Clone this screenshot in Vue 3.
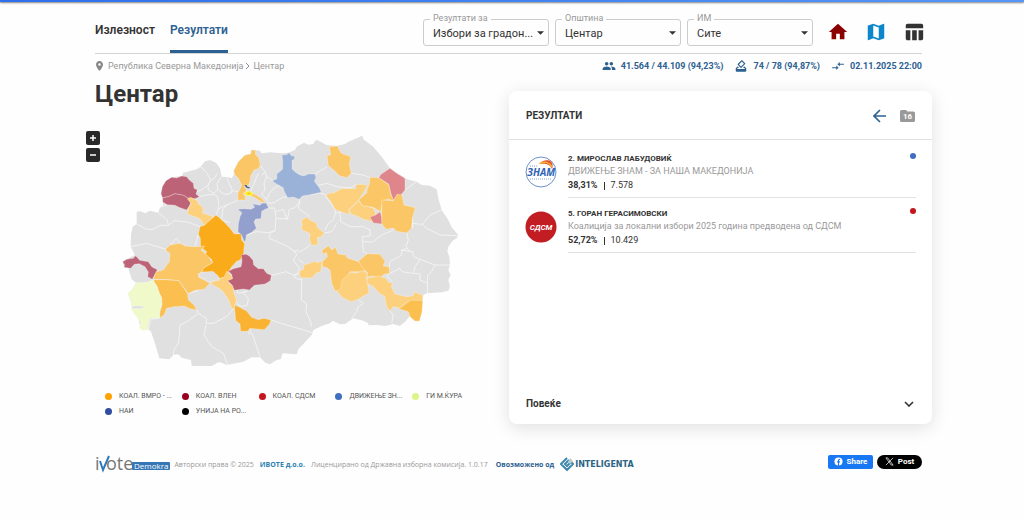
<script setup>
import { ref } from 'vue'

const filters = [
  { id: 'type', label: 'Резултати за', value: 'Избори за градон...' },
  { id: 'municipality', label: 'Општина', value: 'Центар' },
  { id: 'station', label: 'ИМ', value: 'Сите' },
]

const candidates = [
  { id: 2, name: 'МИРОСЛАВ ЛАБУДОВИЌ', party: 'ДВИЖЕЊЕ ЗНАМ - ЗА НАША МАКЕДОНИЈА', share: '38,31%', votes: '7.578', color: '#3f6fbf' },
  { id: 5, name: 'ГОРАН ГЕРАСИМОВСКИ', party: 'Коалиција за локални избори 2025 година предводена од СДСМ', share: '52,72%', votes: '10.429', color: '#c4161c' },
]

const legend = [
  { name: 'КОАЛ. ВМРО - ...', color: '#ffa200' },
  { name: 'КОАЛ. ВЛЕН', color: '#97001f' },
  { name: 'КОАЛ. СДСМ', color: '#c4161c' },
  { name: 'ДВИЖЕЊЕ ЗН...', color: '#3f6fbf' },
  { name: 'ГИ М.ЌУРА', color: '#dcf58a' },
  { name: 'НАИ', color: '#2f4da3' },
  { name: 'УНИЈА НА РО...', color: '#000000' },
]

const country =
  'M153 345L158 320L170 312V275L183 274L195 280L210 272L235 278L240 262L250 254L248 235L243 222L247 200L258 182L275 172L305 168L310 158L350 148L362 140L375 124L390 120L408 128L420 145L425 170L445 172L455 175L461 165V152L475 125L495 105L512 102L514 90H526L540 93L545 100L570 97L605 100L625 98L645 90L650 80L672 68L685 74L700 72L705 62L712 60L740 75L770 78L795 72L805 65L830 55L847 47L850 58L880 80L905 110L930 145L975 175L990 180L1010 185L1025 195L1050 197L1070 208L1075 235L1085 270L1105 300L1115 322L1135 345L1130 355L1118 362L1105 380L1102 395L1108 410L1110 435L1105 450L1112 465L1105 480L1110 500L1105 512L1085 517L1040 520L1030 525L1028 540L1026 575L1018 602L1005 603L990 588L975 605L960 618L940 612L915 618L890 615L865 616V610L850 602L820 595L795 612L780 613L758 602L750 610L725 618L700 630L695 645L670 672L655 688L650 703L608 700L602 718L590 720L570 733L556 728L540 712L515 712L490 725L440 735L425 728L415 727L395 738H335L333 720L305 713L295 703L280 705L268 718L238 715L225 670L212 632L205 630L182 625L178 610L175 595L155 565L152 545L143 520L155 510L168 488L155 478L145 445L132 442L128 425L145 415L165 405L152 380Z'

const regions = [
  { fill: '#bd6377', d: 'M243 222L247 200L258 182L275 172L290 174L305 168L320 170L328 180L340 190L342 205L352 210L348 222L358 230L345 236L325 235L310 226L285 221L265 230L248 234Z' },
  { fill: '#bd6377', d: 'M248 234L265 230L285 221L310 226L325 235L334 244L328 258L320 270L300 263L285 256L262 254L248 246Z' },
  { fill: '#fcd07c', d: 'M322 236L332 232L352 242L356 252L370 264L367 278L382 284L400 290L385 305L372 315L360 296L322 282L326 262L334 252Z' },
  { fill: '#fbc766', d: 'M461 152L475 125L495 105L512 102L514 90H526L527 105L536 112L541 136L535 146L522 150L512 168L510 185L505 196L492 200L500 210L490 222L496 230V240H473L474 218L480 208L485 195L475 175L465 165Z' },
  { fill: '#fbc766', d: 'M514 218L530 226L546 236L557 250L545 246L530 236L512 226Z' },
  { fill: '#fff200', d: 'M498 216L508 213L519 219L514 227L500 227L494 221Z' },
  { fill: '#e39b17', d: 'M504 219L512 217L509 222L502 223Z' },
  { fill: '#46527a', d: 'M492 196L499 194L503 200L509 201V206L500 204Z' },
  { fill: '#939fcd', d: 'M473 268L490 266L513 268L524 262L518 252L540 256L545 250L558 249L566 264L555 268L545 274L543 296L527 297L522 306L529 325L515 337L499 345L497 360L493 366L485 346L474 335L475 312L480 290L486 278Z' },
  { fill: '#9ab1d8', d: 'M606 105L620 104L627 98L634 107L644 109L643 118L636 121V147L646 156L660 165L672 168L685 162H704L708 172L703 184L718 203L724 217L690 224L667 228L658 238L640 231L623 233L612 213L610 203L590 192L576 183L591 176L590 162L602 153L608 147V124Z' },
  { fill: '#fbc766', d: 'M748 80L772 78L783 99L812 110L808 135L814 160L800 173L780 168L762 151L745 137L741 107L752 104Z' },
  { fill: '#de868c', d: 'M930 145L950 160L975 175V210L962 226H950L940 243L933 222L926 192L896 173L903 163Z' },
  { fill: '#fcd07c', d: 'M738 225L750 219H760L785 206L827 206V194L852 193L862 198L848 222L836 240L820 256L806 270L810 284L785 276L765 268L753 246Z' },
  { fill: '#fcd07c', d: 'M836 242L846 256L880 264L888 285L875 291L878 305L850 298L828 287L815 283L807 270Z' },
  { fill: '#fbc766', d: 'M870 172L896 173L926 194L933 225L942 242L925 238L907 242L902 275L880 262L848 257L836 240L860 219L862 206L868 193Z' },
  { fill: '#de868c', d: 'M870 291L887 285L900 275L905 290L906 312L880 309Z' },
  { fill: '#fbc766', d: 'M906 240L940 242L952 222L966 225L972 255L1006 263L998 290L994 325L980 339L950 334L940 324L918 328L906 312L905 280Z' },
  { fill: '#fcd07c', d: 'M664 300L680 292L694 302L709 309L713 323L733 339L723 350L712 353L714 370L710 375H694L688 359L690 341L663 328L667 314Z' },
  { fill: '#fcd07c', d: 'M658 454L671 448V435L690 430L702 424L712 428L725 422V436L722 455L707 460L697 473L665 474L658 464Z' },
  { fill: '#fbc766', d: 'M726 391L745 377L755 390L766 382L774 402L797 405L802 414L836 425L855 446L850 455L810 455L795 480L785 500L782 513L765 513L755 490L750 450L738 442L727 440V425L742 410L740 398L728 402Z' },
  { fill: '#fcd07c', d: 'M770 513L782 506L786 480L812 457L830 459L850 452L862 460L860 475L866 510L867 520L850 528L835 538L814 545L788 533Z' },
  { fill: '#fbc766', d: 'M836 423L862 401L900 403L915 424L910 438L927 440L929 460L912 463L900 473L875 468L861 472L863 459L845 440Z' },
  { fill: '#fcd07c', d: 'M861 475L895 468L917 475L925 487L938 488L934 500L945 522L980 530L1000 527L1002 516L1028 525L1028 541L990 543L975 552L958 564L940 560L930 573L920 560L914 529L900 521L880 500L862 490Z' },
  { fill: '#fbbf4f', d: 'M956 566L976 552L992 541L1028 541L1026 575L1018 604L1005 603L990 590L985 575Z' },
  { fill: '#faab19', d: 'M360 320L373 316L408 285L430 304L450 325L463 342L483 342L485 360L494 372L492 384L491 400L480 420L470 424L455 440L440 465L438 470L420 475L405 464L382 459L365 455L372 443L398 428L395 418L376 404L380 395L362 380L361 355L355 343Z' },
  { fill: '#fbc766', d: 'M257 388L270 375L300 370L315 378L345 380L375 378L363 390L380 404L398 428L372 443L366 455L355 462L357 472L378 483L390 490L372 508L345 511L325 521L307 497L297 482L253 478L219 478L229 455L250 450L268 425L270 400L260 394Z' },
  { fill: '#fbbf4f', d: 'M219 480L253 479L296 482L305 495L323 522L325 540L342 555L350 570L330 566L313 558L282 560L260 565L252 585L239 594L240 575L246 555L244 533L236 515L232 500Z' },
  { fill: '#fcd07c', d: 'M390 490L420 475L432 472L440 453L456 468L455 480L445 487L460 500L462 520L470 540L460 568L453 562L448 545L440 530L425 510Z' },
  { fill: '#bd6377', d: 'M445 454L460 446L483 440L486 425L484 404L498 403L507 407L519 421L521 435L535 446H550L560 460L574 466L571 482L555 492L523 496L508 510L490 507L463 511L457 496L443 482L458 476L455 463Z' },
  { fill: '#fab233', d: 'M463 555L475 560L500 573L515 592L535 599L552 595L573 600L568 613L553 629L510 625L503 634H482L480 612L467 601Z' },
  { fill: '#bd6377', d: 'M128 425L140 418L160 415L167 407L179 421L205 425L215 440L232 449L225 462L217 478L203 470L205 456L195 440L178 431L163 433L152 445L132 442L134 435Z' },
  { fill: '#eff9c9', d: 'M168 488L200 487L219 480L231 500L236 515L245 533L245 555L238 575L239 594L210 594L205 610L203 630L185 631L177 622L183 608L170 590L155 572L153 545L143 520L155 510Z' },
  { fill: '#e0e0e0', d: 'M155 560L165 557L190 559L194 562L180 566H157Z' },
  { fill: '#e0e0e0', d: 'M355 462L372 456L398 454L414 467L418 481L402 482L386 486L374 476L357 472Z' },
]

const borders = [
  'M350 148L362 140L380 158L392 180L384 196L365 210L350 214M392 180L404 175L412 160M384 196L385 210L402 220L413 208L411 190L425 170',
  'M235 278L262 300L265 316L240 316L220 328L200 328L170 312M265 316L282 302L322 306L345 314L360 320M240 262L262 254',
  'M358 230L385 224H405L413 230L417 260L408 285M413 208L430 222L450 222L457 210L445 185L440 172M450 222L460 212L477 216M417 266L440 255L465 245L473 240M425 300L428 270L440 255M425 300L450 308',
  'M540 136L556 156L560 170L552 190L555 210L545 222M535 160L520 195L512 214M556 156L545 165M560 170L580 183M545 222L560 240L570 215L590 200L610 195M560 240L566 250',
  'M566 250L582 248L612 230L623 233M566 264H584L588 296L585 332L565 338L529 335L497 346M588 275L610 268L622 300L628 268L645 263L655 250L660 238M588 296H622',
  'M690 224L720 219L738 225M660 238L655 265L690 290M736 228L765 268L766 280L760 300L745 310L735 330M765 280L785 276M780 280L782 305L810 320L850 320L870 330L870 348L848 350L848 365L878 366',
  'M646 156L660 165M704 162L740 141M708 198L740 190L770 200L810 204L827 194M814 160L850 165L868 172',
  'M975 210L1010 185M940 324L980 339L985 360L978 380L990 395M994 310L1027 313L1050 285L1085 270M1027 313L1040 325L1080 345L1135 347M998 290V325',
  'M878 366L905 345L940 330M848 366L850 395L862 401M980 385L965 390L965 405L930 425L928 440M965 390L998 395L1000 410L1020 418L1065 435H1110M1020 418L1005 440L1000 460L965 455L960 445L930 460M1065 435L1055 455L1043 465L1042 520M1000 460L1020 462V480L1043 490M929 460L920 468L937 485',
  'M585 332L570 340L568 355L580 360L620 378L645 395L650 405L640 420L658 445L655 460L640 465L618 455L600 460L574 466M655 460L640 470L660 480L665 475L664 540L680 550L678 575L690 600L695 620M652 398L670 390L690 375M655 417L671 430M733 339L755 335L770 310M640 395L655 390',
  'M573 600L620 615L665 628L695 638M836 540L850 550L835 560L830 575L815 595M930 573L940 585L935 610M507 625L520 650L530 680L540 710M503 634L510 645',
  'M460 568L440 590L400 610L378 610L380 595L355 580L350 570M378 615L372 645L395 680L430 700L443 735M355 580L320 605L300 615L298 645L295 670L282 690L280 705M325 521L355 511',
  'M470 510L475 520L502 513M502 513L490 520L505 535L502 555L485 560L470 550M270 375L290 355L300 370M355 343L345 380M152 380L200 370L258 388M239 594L212 598L205 630',
]

const people = 'M16 11c1.66 0 2.99-1.34 2.99-3S17.66 5 16 5c-1.66 0-3 1.34-3 3s1.34 3 3 3zm-8 0c1.66 0 2.99-1.34 2.99-3S9.66 5 8 5C6.34 5 5 6.34 5 8s1.34 3 3 3zm0 2c-2.33 0-7 1.17-7 3.5V19h14v-2.5c0-2.33-4.67-3.5-7-3.5zm8 0c-.29 0-.62.02-.97.05 1.16.84 1.97 1.97 1.97 3.45V19h6v-2.5c0-2.33-4.67-3.5-7-3.5z'
const ballot = 'M18 13h-.68l-2 2h1.91L19 17H5l1.78-2h2.05l-2-2H6l-3 3v4c0 1.1.89 2 1.99 2H19c1.1 0 2-.89 2-2v-4l-3-3zm-1-5.05l-4.95 4.95-3.54-3.54 4.95-4.95L17 7.95zm-4.24-5.66L6.39 8.66c-.39.39-.39 1.02 0 1.41l4.95 4.95c.39.39 1.02.39 1.41 0l6.36-6.36c.39-.39.39-1.02 0-1.41L14.16 2.3c-.38-.4-1.01-.4-1.4-.01z'
const arrows = 'M9.01 14H2v2h7.01v3L13 15l-3.99-4v3zm5.98-1v-3H22V8h-7.01V5L11 9l3.99 4z'

const stats = [
  { icon: people, text: '41.564 / 44.109 (94,23%)' },
  { icon: ballot, text: '74 / 78 (94,87%)' },
  { icon: arrows, text: '02.11.2025 22:00' },
]

const zoom = ref(1)
</script>

<template>
  <div class="page">
    <div class="topbar"></div>
    <header class="header">
      <nav class="tabs">
        <a href="#turnout" class="tab">Излезност</a>
        <a href="#results" class="tab active">Резултати</a>
      </nav>
      <div class="filters">
        <div v-for="f in filters" :key="f.id" class="field">
          <label :for="f.id">{{ f.label }}</label>
          <select :id="f.id"><option>{{ f.value }}</option></select>
          <svg class="caret" viewBox="0 0 8 4"><path d="M0 0h8L4 4z" /></svg>
        </div>
      </div>
      <div class="views">
        <button aria-label="Почетна" class="home"><svg viewBox="0 0 24 24"><path d="M10 20v-6h4v6h5v-8h3L12 3 2 12h3v8z" /></svg></button>
        <button aria-label="Мапа" class="map-view"><svg viewBox="0 0 24 24"><path d="M20.500 3l-.16.03L15 5.100 9 3 3.360 4.900c-.21.07-.36.25-.36.48V20.500c0 .28.22.5.5.5l.16-.03L9 18.900l6 2.100 5.640-1.900c.21-.07.36-.25.36-.48V3.500c0-.28-.22-.5-.5-.5zM15 19l-6-2.110V5l6 2.110V19z" /></svg></button>
        <button aria-label="Табела" class="table-view"><svg viewBox="0 0 24 24"><path d="M10 10h5v11h-5zM17 21h3c1.1 0 2-.9 2-2v-9h-5v11zm3-18H5c-1.1 0-2 .9-2 2v3h19V5c0-1.1-.9-2-2-2zM3 19c0 1.1.9 2 2 2h3V10H3v9z" /></svg></button>
      </div>
    </header>

    <div class="meta">
      <div class="crumbs">
        <svg viewBox="5 2 14 20"><path d="M12 2C8.130 2 5 5.130 5 9c0 5.250 7 13 7 13s7-7.750 7-13c0-3.870-3.130-7-7-7zm0 9.500a2.500 2.500 0 0 1 0-5 2.500 2.500 0 0 1 0 5z" /></svg>
        <a href="#country">Република Северна Македонија</a>
        <svg class="sep" viewBox="0 0 6 8"><path d="M1 1l3 3-3 3" /></svg>
        <span>Центар</span>
      </div>
      <div class="stats">
        <div v-for="s in stats" :key="s.text" class="stat">
          <svg viewBox="0 0 24 24"><path :d="s.icon" /></svg>{{ s.text }}
        </div>
      </div>
    </div>

    <main class="main">
      <section class="left">
        <h1>Центар</h1>
        <div class="map">
          <svg viewBox="18 0 1269 780" role="img" aria-label="Мапа на општини">
            <path class="country" :d="country" />
            <path v-for="(b, i) in borders" :key="'b' + i" class="border" :d="b" />
            <path v-for="(r, i) in regions" :key="i" class="region" :d="r.d" :fill="r.fill" />
          </svg>
          <div class="zoom">
            <button aria-label="Зголеми" @click="zoom++"><svg viewBox="0 0 8 8"><path d="M4 1v6M1 4h6" /></svg></button>
            <button aria-label="Намали" @click="zoom--"><svg viewBox="0 0 8 8"><path d="M1 4h6" /></svg></button>
          </div>
        </div>
        <ul class="legend">
          <li v-for="l in legend" :key="l.name">
            <i :style="{ background: l.color }"></i><span>{{ l.name }}</span>
          </li>
        </ul>
      </section>

      <section class="card">
        <div class="card-head">
          <h2>РЕЗУЛТАТИ</h2>
          <button aria-label="Назад" class="back"><svg viewBox="0 0 14 14"><path d="M13 7H2M7 1L1 7l6 6" /></svg></button>
          <div class="folder">
            <svg viewBox="0 0 15 12"><path d="M1.500 0H6l1.500 1.500h6A1.500 1.500 0 0 1 15 3v7.500a1.500 1.500 0 0 1-1.500 1.500h-12A1.500 1.500 0 0 1 0 10.500v-9A1.500 1.500 0 0 1 1.500 0z" /></svg>
            <span>16</span>
          </div>
        </div>
        <article v-for="c in candidates" :key="c.id" class="candidate">
          <svg v-if="c.id === 2" class="logo" viewBox="0 0 32 32">
            <circle cx="16" cy="16" r="15" fill="#fff" stroke="#6d8fc8" stroke-width="1" />
            <path d="M14 8C17 4 23 3 26 5.500C28 8 28 10 27 13C25 8 21 7 14 8z" fill="#e8502a" />
            <path d="M15 7.500C20 5 25 6.500 27 11" fill="none" stroke="#f9b233" stroke-width="1.500" />
            <path d="M5 10h8M5 23h22" stroke="#8aa6d6" stroke-width="1" stroke-dasharray="1 1" />
            <text x="16" y="20" class="znam">ЗНАМ</text>
          </svg>
          <svg v-else class="logo" viewBox="0 0 32 32">
            <circle cx="16" cy="16" r="15.500" fill="#c11d23" />
            <text x="16" y="19" class="sdsm">СДСМ</text>
          </svg>
          <div class="info">
            <h3>{{ c.id }}. {{ c.name }}</h3>
            <p class="party">{{ c.party }}</p>
            <p class="votes"><b>{{ c.share }}</b><i></i>{{ c.votes }}</p>
            <span class="dot" :style="{ background: c.color }"></span>
          </div>
        </article>
        <button class="more">Повеќе
          <svg viewBox="0 0 10 6"><path d="M1 1l4 4 4-4" /></svg>
        </button>
      </section>
    </main>

    <footer class="footer">
      <div class="ivote">
        <svg viewBox="0 0 37 20">
          <text x="0" y="17">i</text>
          <path d="M5 8l3 9 6-14" />
          <text x="11" y="17">ote</text>
        </svg>
        <span>Demokra</span>
      </div>
      <p>Авторски права © 2025</p>
      <a href="#ivote">ИВОТЕ д.о.о.</a>
      <p class="license">Лиценцирано од Државна изборна комисија. 1.0.17</p>
      <strong>Овозможено од</strong>
      <a href="#inteligenta" class="intel">
        <svg viewBox="0 0 14 14"><path d="M7 1L1 7l6 6 6-6-2-2-4 4-2-2 4-4" fill="none" stroke="#3f87ad" stroke-width="2" /><path d="M10 1l3 3-3 3-2-2z" fill="#b9cdd6" /></svg>
        <span>INTELIGENTA</span>
      </a>
      <div class="share">
        <button class="fb"><svg viewBox="0 0 10 10"><circle cx="5" cy="5" r="4.500" fill="#fff" /><path d="M5 10V5.500M3.500 5.500h3.200M5 6V4q0-1.500 1.800-1.300" fill="none" stroke="#1877f2" stroke-width="1.300" /></svg>Share</button>
        <button class="x"><svg viewBox="0 0 10 10"><path d="M1 1h2l6 8H7zM9 1L1 9" fill="none" stroke="#fff" stroke-width=".8" /></svg>Post</button>
      </div>
    </footer>
  </div>
</template>

<style>
body {
  margin: 0;
  background: #fefefe;
}
</style>

<style scoped>
.page {
  font-family: Roboto, 'Noto Sans', sans-serif;
  font-size: 9px;
  line-height: 12px;
  color: #333;
}
h1, h2, h3, p, ul { margin: 0; padding: 0; }
button {
  border: 0;
  padding: 0;
  background: none;
  font: inherit;
  color: inherit;
  cursor: pointer;
}
a { color: inherit; text-decoration: none; }
svg { display: block; }
.topbar {
  height: 2px;
  background: linear-gradient(90deg, #2f6fea, #5596f8);
  box-shadow: 0 1px 2px rgba(0, 0, 0, 0.5);
}
.header {
  display: flex;
  margin: 0 102px 0 95px;
  height: 51px;
  border-bottom: 1px solid #d4d4d4;
}
.tabs {
  display: flex;
  gap: 15px;
  margin-right: auto;
}
.tab {
  height: 48px;
  line-height: 56px;
  font-size: 12px;
  font-weight: 600;
  border-bottom: 3px solid transparent;
}
.tab.active {
  color: #2c6191;
  border-bottom-color: #2c6191;
}
.filters {
  display: flex;
  gap: 6px;
  padding-top: 17px;
}
.field { position: relative; width: 126px; }
.field label {
  position: absolute;
  left: 7px;
  top: -7px;
  padding: 0 3px;
  font-size: 9px;
  color: #999;
  background: #fefefe;
}
.field select {
  width: 100%;
  height: 27px;
  padding: 2px 12px 0 9px;
  appearance: none;
  border: 1px solid #ccc;
  border-radius: 3px;
  background: none;
  font: 11px Roboto, 'Noto Sans', sans-serif;
  color: #333;
}
.caret {
  position: absolute;
  right: 5px;
  top: 12px;
  width: 7px;
  height: 4px;
  fill: #333;
  pointer-events: none;
}
.views {
  display: flex;
  gap: 16px;
  padding: 19px 0 0 14px;
  margin-right: -3px;
}
.views svg { width: 22px; height: 22px; }
.views button { height: 22px; }
.home { fill: #8b0000; }
.map-view { fill: #0d86cc; }
.table-view { fill: #333; }
.meta {
  display: flex;
  justify-content: space-between;
  margin: 0 102px 0 95px;
  height: 24px;
  align-items: center;
}
.crumbs {
  display: flex;
  align-items: center;
  color: #999;
}
.crumbs svg { width: 7px; height: 10px; margin: 0 5px 0 1px; fill: #888; }
.crumbs .sep { width: 6px; height: 8px; margin: 0 2px 0 2px; fill: none; stroke: #888; }
.stats { display: flex; gap: 11px; color: #2c6191; font-weight: 700; }
.stat { display: flex; align-items: center; gap: 5px; }
.stat svg { width: 14px; height: 14px; fill: #2c6191; }
.main {
  display: grid;
  grid-template-columns: minmax(0, 1fr) minmax(0, 1fr);
  margin: 0 92px 0 86px;
}
h1 {
  padding: 2px 0 12px 9px;
  font-size: 24px;
  line-height: 28px;
  font-weight: 700;
}
.map { position: relative; }
.map > svg { width: 100%; }
.country { fill: #e0e0e0; }
.border { fill: none; stroke: #f3f3f3; stroke-width: 3; stroke-linejoin: round; }
.region { stroke: #fff; stroke-opacity: 0.4; stroke-width: 2; stroke-linejoin: round; }
.zoom {
  position: absolute;
  left: 0;
  top: 11px;
  display: grid;
  gap: 3px;
}
.zoom button {
  display: grid;
  place-items: center;
  width: 14px;
  height: 14px;
  border-radius: 2px;
  background: #292929;
}
.zoom svg { width: 8px; height: 8px; stroke: #fff; stroke-width: 1.5; }
.legend {
  display: grid;
  grid-template-columns: repeat(5, minmax(0, 1fr));
  row-gap: 4px;
  margin: 11px 20px 0 19px;
  list-style: none;
  font-size: 7px;
  line-height: 11px;
  color: #555;
}
.legend li { display: flex; align-items: center; gap: 7px; }
.legend i { flex: none; width: 7px; height: 7px; border-radius: 50%; }
.legend span { white-space: nowrap; }
.card {
  display: flex;
  flex-direction: column;
  margin-top: 13px;
  min-height: 333px;
  align-self: start;
  border-radius: 8px;
  background: #fff;
  box-shadow: 0 4px 18px rgba(0, 0, 0, 0.12);
}
.card-head {
  display: flex;
  align-items: center;
  height: 49px;
  padding: 2px 17px 0;
  box-sizing: border-box;
  border-bottom: 1px solid #e2e2e2;
}
h2 { margin-right: auto; font-size: 10px; font-weight: 700; }
.back svg { width: 14px; height: 14px; fill: none; stroke: #2c6191; stroke-width: 1.6; }
.folder { position: relative; margin-left: 13px; }
.folder svg { width: 15px; height: 12px; fill: #999; }
.folder span {
  position: absolute;
  inset: 0;
  text-align: center;
  font-size: 8px;
  line-height: 14px;
  font-weight: 700;
  color: #fff;
}
.candidate { display: flex; padding: 0 16px; }
.logo { width: 32px; height: 32px; margin: 16px 11px 0 0; }
.znam { font: italic 700 10px 'Open Sans', sans-serif; fill: #2e63b5; text-anchor: middle; }
.sdsm { font: italic 700 8px 'Roboto', sans-serif; fill: #fff; text-anchor: middle; }
.info {
  position: relative;
  flex: 1;
  padding: 13px 0 5px;
  border-bottom: 1px solid #e2e2e2;
}
.candidate + .candidate .info { padding-top: 10px; }
.candidate + .candidate .logo { margin-top: 13px; }
h3 { font-size: 8px; font-weight: 700; line-height: 12px; }
.party { font-size: 9px; line-height: 13px; color: #999; }
.votes { display: flex; align-items: center; line-height: 13px; padding-top: 1px; }
.votes i { width: 1px; height: 8px; margin: 0 6px; background: #333; }
.dot {
  position: absolute;
  right: 0;
  top: 13px;
  width: 6px;
  height: 6px;
  border-radius: 50%;
}
.candidate + .candidate .dot { top: 10px; }
.more {
  display: flex;
  align-items: center;
  justify-content: space-between;
  margin-top: auto;
  padding: 0 18px 0 17px;
  height: 40px;
  font-size: 10px;
  font-weight: 700;
}
.more svg { width: 10px; height: 6px; fill: none; stroke: #333; stroke-width: 1.6; }
.footer {
  display: flex;
  align-items: center;
  margin: 29px 102px 0 95px;
  height: 20px;
  font-family: 'Open Sans', 'Noto Sans', sans-serif;
  font-size: 7px;
  color: #999;
}
.ivote { display: flex; align-items: flex-end; margin-right: 4px; }
.ivote svg { width: 37px; height: 20px; fill: #777; overflow: visible; }
.ivote text { font: 500 18px 'Open Sans', sans-serif; }
.ivote path { fill: none; stroke: #2f78bd; stroke-width: 2; }
.ivote span {
  margin-bottom: 3px;
  padding: 0 2px;
  border-radius: 1px;
  background: #3577b5;
  color: #fff;
  font: 8px/8px 'Open Sans', sans-serif;
}
.footer p, .footer strong { padding-top: 4px; }
.footer > a { padding: 4px 6px 0; color: #2c7fb0; font-weight: 700; }
.footer strong { margin-left: 8px; color: #2c6191; }
.footer .intel { display: flex; align-items: center; gap: 1px; padding: 2px 0 0 6px; color: #2b6583; }
.intel svg { width: 14px; height: 14px; }
.intel span { font: 700 8px 'DejaVu Sans', sans-serif; }
.share { display: flex; gap: 4px; margin-left: auto; margin-top: -3px; }
.share button {
  display: flex;
  align-items: center;
  justify-content: center;
  gap: 4px;
  height: 14px;
  width: 45px;
  border-radius: 2px;
  background: #1877f2;
  color: #fff;
  font: 700 8px Roboto, sans-serif;
}
.share svg { width: 9px; height: 9px; }
.share .x { border-radius: 7px; background: #000; }
</style>
